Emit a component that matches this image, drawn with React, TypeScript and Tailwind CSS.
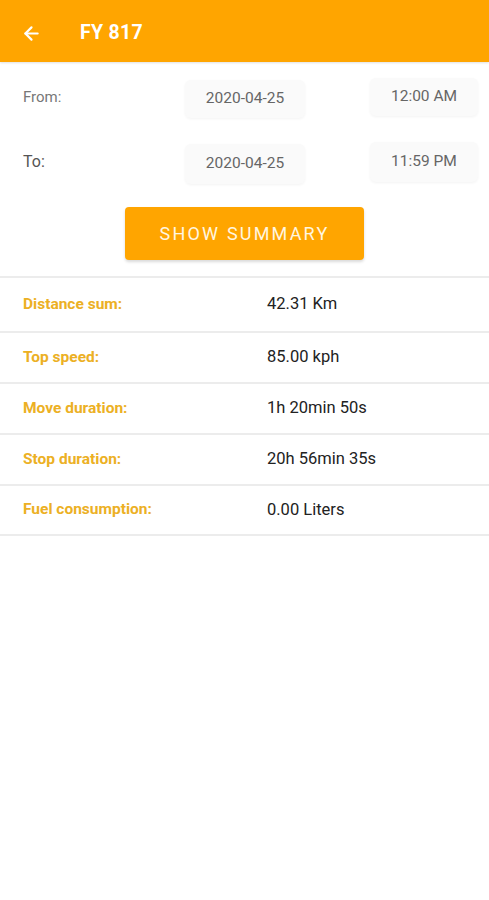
import React from "react";
import { ArrowLeft } from "lucide-react";

const rows = [
  { label: "Distance sum:", value: "42.31 Km", h: "h-[55px]" },
  { label: "Top speed:", value: "85.00 kph", h: "h-[51px]" },
  { label: "Move duration:", value: "1h 20min 50s", h: "h-[51px]" },
  { label: "Stop duration:", value: "20h 56min 35s", h: "h-[51px]" },
  { label: "Fuel consumption:", value: "0.00 Liters", h: "h-[50px]" },
];

function Chip({ text, className }: { text: string; className: string }) {
  return (
    <div
      className={`flex items-center justify-center rounded-md bg-[#fafafa] shadow-[0_1px_3px_rgba(0,0,0,0.05)] text-[15.5px] text-[#666] ${className}`}
    >
      {text}
    </div>
  );
}

export default function App() {
  return (
    <div className="w-[489px] h-[900px] bg-white font-['Roboto',sans-serif]">
      <div className="h-[62px] bg-[#ffa500] flex items-center pl-[21px] pt-[4px] shadow-[0_1px_2px_rgba(0,0,0,0.12)]">
        <ArrowLeft className="w-[21px] h-[21px] text-white" strokeWidth={2.5} />
        <span className="ml-[38px] text-white font-bold text-[19.5px] tracking-[0.3px]">FY 817</span>
      </div>

      <div className="flex items-center h-[40px] mt-[15px]">
        <span className="w-[185px] pl-[23px] text-[15px] text-[#777]">From:</span>
        <Chip text="2020-04-25" className="w-[120px] h-[38px] mt-[3px]" />
        <Chip text="12:00 AM" className="w-[108px] h-[38px] ml-[65px]" />
      </div>

      <div className="flex items-center h-[40px] mt-[25px]">
        <span className="w-[185px] pl-[23px] text-[16px] text-[#555]">To:</span>
        <Chip text="2020-04-25" className="w-[120px] h-[40px] mt-[3px]" />
        <Chip text="11:59 PM" className="w-[108px] h-[40px] ml-[65px]" />
      </div>

      <div className="flex justify-center mt-[25px]">
        <button className="w-[239px] h-[53px] rounded-[4px] bg-[#ffa500] text-[#fff6e0] text-[18px] tracking-[2.2px] shadow-[0_2px_3px_rgba(0,0,0,0.15)]">
          SHOW SUMMARY
        </button>
      </div>

      <div className="mt-[16px] border-t-2 border-[#ececec]">
        {rows.map((r) => (
          <div key={r.label} className={`flex items-center ${r.h} border-b-2 border-[#ececec]`}>
            <span className="w-[267px] pl-[23px] text-[15.5px] font-bold text-[#ecb024]">{r.label}</span>
            <span className="text-[16.5px] text-[#222]">{r.value}</span>
          </div>
        ))}
      </div>
    </div>
  );
}
